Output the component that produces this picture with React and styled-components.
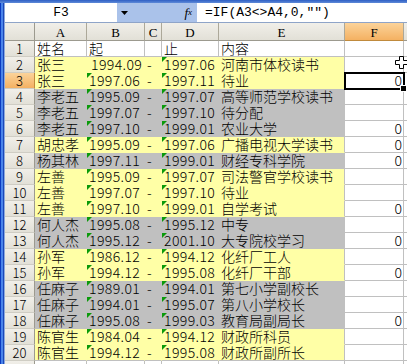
import React from 'react';
import styled, { createGlobalStyle, css } from 'styled-components';

const Global = createGlobalStyle`
  html, body { margin: 0; padding: 0; background: #fff; overflow: hidden; }
  #root { width: 407px; height: 364px; }
`;

const FILLS = { y: '#ffffa6', g: '#c0c0c0' };
const GRID = '#c0c0c0';
const CJK = '"Noto Sans CJK SC", sans-serif';

const Window = styled.div`
  position: relative;
  width: 407px;
  height: 364px;
  overflow: hidden;
  display: flex;
  flex-direction: column;
  background: #fff;
`;

const TopStrip = styled.div`
  height: 3px;
  flex: none;
  background: linear-gradient(#2f5fc4, #5e8ad8);
`;

const Body = styled.div`
  flex: 1;
  display: grid;
  grid-template-columns: 5px 1fr;
  min-height: 0;
`;

const LeftFrame = styled.div`
  background: linear-gradient(
    to right,
    #0b3bc2 0,
    #0b3bc2 1px,
    #4a84ea 1px,
    #4a84ea 3px,
    #1c48b8 3px,
    #1c48b8 4px,
    #8aa8dc 4px
  );
`;

const Main = styled.div`
  display: flex;
  flex-direction: column;
  min-width: 0;
  overflow: hidden;
`;

const FormulaBar = styled.div`
  height: 20px;
  flex: none;
  display: flex;
  align-items: stretch;
  background: #aac2ea;
  border-bottom: 1px solid #8ea4c8;
  box-sizing: border-box;
`;

const NameBox = styled.div`
  width: 112px;
  background: #fff;
  display: flex;
  align-items: center;
  justify-content: center;
  font: 13px/1 "Liberation Mono", monospace;
  color: #000;
`;

const DropButton = styled.div`
  width: 14px;
  display: flex;
  align-items: center;
  justify-content: center;
`;

const FxBox = styled.div`
  width: 66px;
  display: flex;
  align-items: center;
  justify-content: flex-end;
  padding-right: 5px;
  box-sizing: border-box;
  font: italic 13px/1 "Liberation Serif", serif;
  color: #000;
  sub {
    font-size: 9px;
    vertical-align: -1px;
  }
`;

const FormulaInput = styled.div`
  flex: 1;
  background: #fff;
  display: flex;
  align-items: center;
  padding-left: 8px;
  font: 13px/1 "Liberation Mono", monospace;
  color: #000;
  white-space: nowrap;
`;

const Sheet = styled.div`
  display: grid;
  grid-template-columns: 30px 52px 58px 17px 57px 126px 59px 40px;
  grid-template-rows: 18px;
  grid-auto-rows: 16px;
`;

const headerBase = css`
  box-sizing: border-box;
  display: flex;
  align-items: center;
  justify-content: center;
  color: #000;
  background: ${(p) =>
    p.$active ? 'linear-gradient(#fbd39a, #f4b162)' : 'linear-gradient(#f1efe9, #e2e0d7)'};
`;

const Corner = styled.div`
  ${headerBase};
  border-right: 1px solid #9c9a8f;
  border-bottom: 1px solid #9c9a8f;
`;

const ColHeader = styled.div`
  ${headerBase};
  border-right: 1px solid #aca899;
  border-bottom: 1px solid ${(p) => (p.$active ? '#c08a3c' : '#9c9a8f')};
  font: 13px/1 "Liberation Serif", serif;
  padding-top: 1px;
`;

const RowHeader = styled.div`
  ${headerBase};
  border-right: 1px solid ${(p) => (p.$active ? '#c08a3c' : '#9c9a8f')};
  border-bottom: 1px solid #cfcdc4;
  font: 300 13px/1 ${CJK};
`;

const Cell = styled.div`
  position: relative;
  box-sizing: border-box;
  background: ${(p) => (p.$fill ? FILLS[p.$fill] : '#fff')};
  border-right: 1px solid ${(p) => (p.$fill && !p.$edge ? FILLS[p.$fill] : GRID)};
  border-bottom: 1px solid ${(p) => (p.$fill && !p.$last ? FILLS[p.$fill] : GRID)};
  padding: 0 ${(p) => (p.$right ? '1px' : '2px')} 0 ${(p) => (p.$shift ? '4px' : '2px')};
  text-align: ${(p) => (p.$right ? 'right' : 'left')};
  font: 300 14px/15px ${CJK};
  letter-spacing: ${(p) => (p.$num ? '0.4px' : '0')};
  color: #000;
  white-space: nowrap;
  z-index: ${(p) => (p.$active ? 2 : 0)};
  ${(p) =>
    p.$tri &&
    css`
      &::before {
        content: '';
        position: absolute;
        left: 0;
        top: 0;
        border-top: 5px solid #0a9a0a;
        border-right: 5px solid transparent;
      }
    `}
  ${(p) =>
    p.$active &&
    css`
      outline: 2px solid #000;
      outline-offset: -1px;
      &::after {
        content: '';
        position: absolute;
        right: -4px;
        bottom: -4px;
        width: 5px;
        height: 5px;
        background: #000;
        border: 1px solid #fff;
      }
    `}
`;

const Cursor = styled.svg`
  position: absolute;
  left: 395px;
  top: 56px;
  z-index: 5;
`;

const DATA = [
  ['姓名', '起', '', '止', '内容', '', null],
  ['张三', '1994.09', '-', '1997.06', '河南市体校读书', '', 'y'],
  ['张三', '1997.06', '-', '1997.11', '待业', '0', 'y'],
  ['李老五', '1995.09', '-', '1997.07', '高等师范学校读书', '', 'g'],
  ['李老五', '1997.07', '-', '1997.10', '待分配', '', 'g'],
  ['李老五', '1997.10', '-', '1999.01', '农业大学', '0', 'g'],
  ['胡忠孝', '1995.09', '-', '1997.06', '广播电视大学读书', '0', 'y'],
  ['杨其林', '1997.11', '-', '1999.01', '财经专科学院', '0', 'g'],
  ['左善', '1995.09', '-', '1997.07', '司法警官学校读书', '', 'y'],
  ['左善', '1997.07', '-', '1997.10', '待业', '', 'y'],
  ['左善', '1997.10', '-', '1999.01', '自学考试', '0', 'y'],
  ['何人杰', '1995.08', '-', '1995.12', '中专', '', 'g'],
  ['何人杰', '1995.12', '-', '2001.10', '大专院校学习', '0', 'g'],
  ['孙军', '1986.12', '-', '1994.12', '化纤厂工人', '', 'y'],
  ['孙军', '1994.12', '-', '1995.08', '化纤厂干部', '0', 'y'],
  ['任麻子', '1989.01', '-', '1994.01', '第七小学副校长', '', 'g'],
  ['任麻子', '1994.01', '-', '1995.07', '第八小学校长', '', 'g'],
  ['任麻子', '1995.08', '-', '1999.03', '教育局副局长', '0', 'g'],
  ['陈官生', '1984.04', '-', '1994.12', '财政所科员', '', 'y'],
  ['陈官生', '1994.12', '-', '1995.08', '财政所副所长', '', 'y'],
  ['', '', '', '', '', '', null],
];

const COLS = ['A', 'B', 'C', 'D', 'E', 'F', 'G'];

export default function App() {
  return (
    <>
      <Global />
      <Window>
        <TopStrip />
        <Body>
          <LeftFrame />
          <Main>
            <FormulaBar>
              <NameBox>F3</NameBox>
              <DropButton>
                <svg width="7" height="4" viewBox="0 0 7 4">
                  <polygon points="0,0 7,0 3.5,4" fill="#000" />
                </svg>
              </DropButton>
              <FxBox>
                f<sub>x</sub>
              </FxBox>
              <FormulaInput>=IF(A3&lt;&gt;A4,0,"")</FormulaInput>
            </FormulaBar>
            <Sheet>
              <Corner />
              {COLS.map((c) => (
                <ColHeader key={c} $active={c === 'F'}>
                  {c}
                </ColHeader>
              ))}
              {DATA.map((r, i) => {
                const n = i + 1;
                const fill = r[6];
                const last = n === 20;
                return (
                  <React.Fragment key={n}>
                    <RowHeader $active={n === 3}>{n}</RowHeader>
                    <Cell $fill={fill} $last={last}>{r[0]}</Cell>
                    <Cell $fill={fill} $last={last} $num $tri={n >= 3 && n <= 20} $shift={n === 2}>
                      {r[1]}
                    </Cell>
                    <Cell $fill={fill} $last={last}>{r[2]}</Cell>
                    <Cell $fill={fill} $last={last} $num $tri={n >= 2 && n <= 20}>
                      {r[3]}
                    </Cell>
                    <Cell $fill={fill} $last={last} $edge>
                      {r[4]}
                    </Cell>
                    <Cell $right $active={n === 3}>
                      {r[5]}
                    </Cell>
                    <Cell />
                  </React.Fragment>
                );
              })}
            </Sheet>
          </Main>
        </Body>
        <Cursor width="13" height="13" viewBox="0 0 13 13">
          <polygon
            points="4.5,0.5 8.5,0.5 8.5,4.5 12.5,4.5 12.5,8.5 8.5,8.5 8.5,12.5 4.5,12.5 4.5,8.5 0.5,8.5 0.5,4.5 4.5,4.5"
            fill="#fff"
            stroke="#000"
            strokeWidth="1"
          />
        </Cursor>
      </Window>
    </>
  );
}
